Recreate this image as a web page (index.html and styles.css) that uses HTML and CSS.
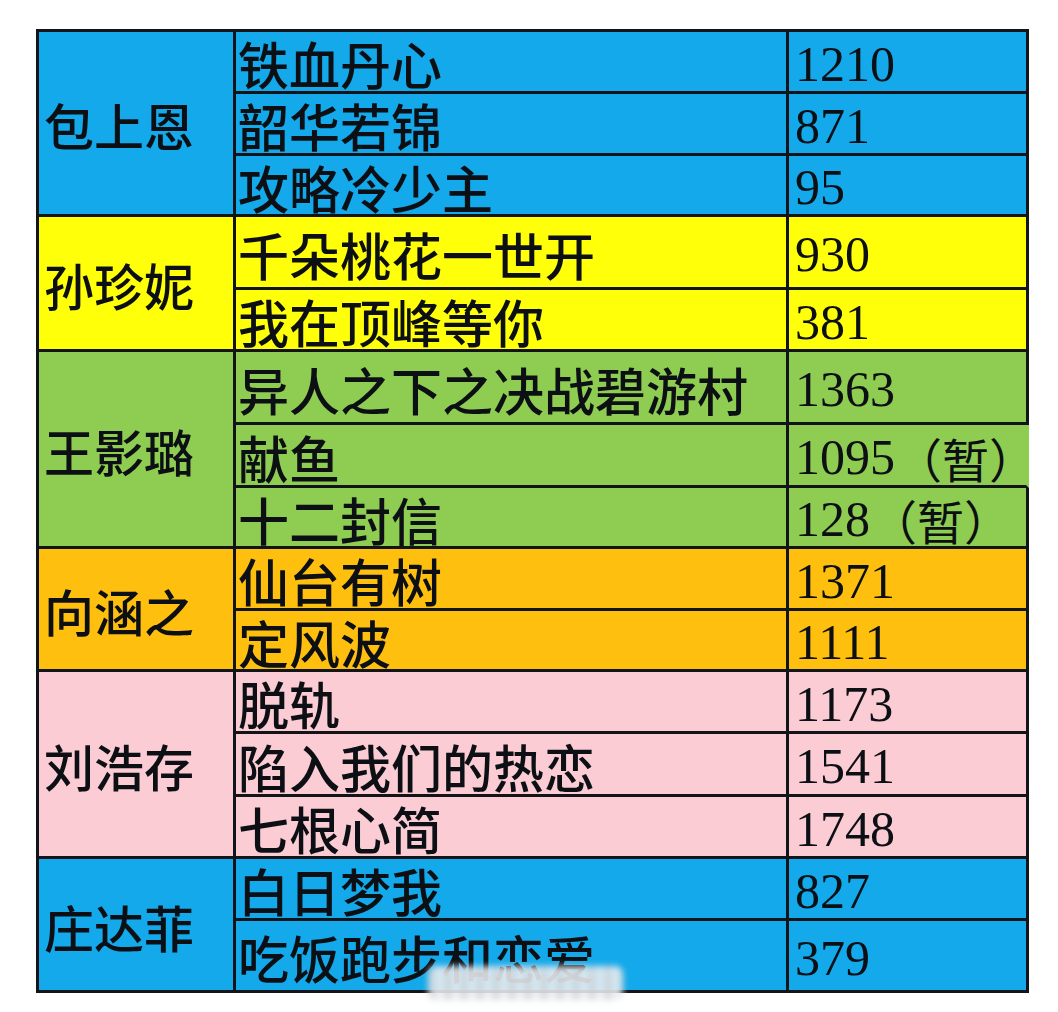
FILE: index.html
```html
<!DOCTYPE html>
<html lang="zh">
<head>
<meta charset="utf-8">
<link rel="stylesheet" href="styles.css">
</head>
<body>
<div class="sheet">
  <div class="grid">
    <div class="name c-blue span3">包上恩</div>
    <div class="title c-blue">铁血丹心</div><div class="num c-blue">1210</div>
    <div class="title c-blue">韶华若锦</div><div class="num c-blue">871</div>
    <div class="title c-blue">攻略冷少主</div><div class="num c-blue">95</div>

    <div class="name c-yellow span2">孙珍妮</div>
    <div class="title c-yellow">千朵桃花一世开</div><div class="num c-yellow">930</div>
    <div class="title c-yellow">我在顶峰等你</div><div class="num c-yellow">381</div>

    <div class="name c-green span3">王影璐</div>
    <div class="title c-green">异人之下之决战碧游村</div><div class="num c-green">1363</div>
    <div class="title c-green">献鱼</div><div class="num c-green open-right">1095 <span class="cjk">（暂）</span></div>
    <div class="title c-green">十二封信</div><div class="num c-green">128 <span class="cjk">（暂）</span></div>

    <div class="name c-orange span2">向涵之</div>
    <div class="title c-orange">仙台有树</div><div class="num c-orange">1371</div>
    <div class="title c-orange">定风波</div><div class="num c-orange">1111</div>

    <div class="name c-pink span3">刘浩存</div>
    <div class="title c-pink">脱轨</div><div class="num c-pink">1173</div>
    <div class="title c-pink">陷入我们的热恋</div><div class="num c-pink">1541</div>
    <div class="title c-pink">七根心简</div><div class="num c-pink">1748</div>

    <div class="name c-blue span2">庄达菲</div>
    <div class="title c-blue">白日梦我</div><div class="num c-blue">827</div>
    <div class="title c-blue">吃饭跑步和恋爱</div><div class="num c-blue">379</div>
  </div>
  <div class="watermark"></div>
</div>
</body>
</html>
```
FILE: styles.css
```css
html, body {
  margin: 0;
  padding: 0;
  background: #ffffff;
}

.sheet {
  position: relative;
  width: 1058px;
  height: 1012px;
  padding: 29px 0 0 36px;
  box-sizing: border-box;
}

.grid {
  display: grid;
  width: 993px;
  box-sizing: border-box;
  grid-template-columns: 197px 553px 240px;
  grid-template-rows: 62px 62px 61px 73px 62px 73px 63px 61px 62px 61px 62px 63px 62px 62px 72px;
  border-top: 3px solid #111418;
  border-left: 3px solid #111418;
}

.grid > div {
  box-sizing: border-box;
  border-right: 3px solid #111418;
  border-bottom: 3px solid #111418;
  display: flex;
  align-items: center;
  color: #0c0f14;
  white-space: nowrap;
  line-height: 1;
  overflow: visible;
}

.span3 { grid-row: span 3; }
.span2 { grid-row: span 2; }

.name {
  font-family: "Noto Sans CJK SC", "Noto Sans", sans-serif;
  font-size: 50px;
  font-weight: 500;
  padding-left: 5px;
  padding-top: 2px;
}

.title {
  font-family: "Noto Sans CJK SC", "Noto Sans", sans-serif;
  font-size: 51px;
  font-weight: 500;
  padding-left: 2px;
  padding-top: 4px;
}

.num {
  font-family: "Liberation Serif", "Times New Roman", serif;
  font-size: 50px;
  padding-left: 6px;
  padding-top: 4px;
}

.cjk {
  font-family: "Noto Sans CJK SC", sans-serif;
  font-size: 47px;
  margin-left: 0;
}

.c-blue { background: #13a9ea; }
.c-yellow { background: #ffff0a; }
.c-green { background: #8fcc52; }
.c-orange { background: #ffbf0f; }
.c-pink { background: #fbccd4; }

.grid > .open-right { border-right-color: #8fcc52; }

.watermark {
  position: absolute;
  left: 428px;
  top: 966px;
  width: 195px;
  height: 34px;
  border-radius: 8px;
  background:
    repeating-linear-gradient(90deg, rgba(200, 200, 205, 0.55) 0 8px, rgba(255, 255, 255, 0) 8px 16px),
    rgba(238, 240, 242, 0.88);
  filter: blur(3px);
}
```
